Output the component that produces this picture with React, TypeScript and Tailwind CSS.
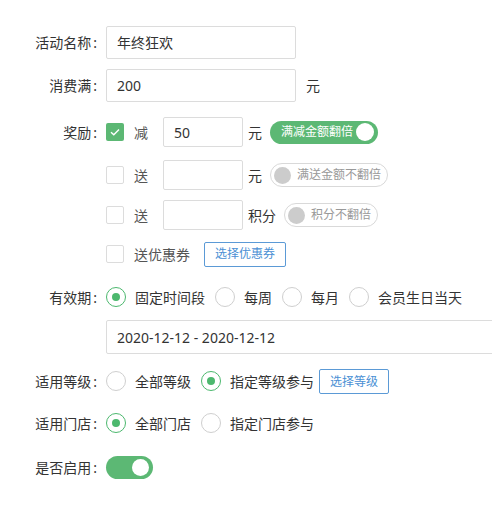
import React from "react";

const GREEN = "bg-[#5cb874]";

function Label({ text }: { text?: string }) {
  return (
    <div className="w-[98px] shrink-0 text-right text-[14px] text-[#333] pr-[1px]">
      {text && (
        <>
          {text}
          <span className="ml-[2px]">:</span>
        </>
      )}
    </div>
  );
}

function Checkbox({ checked }: { checked?: boolean }) {
  if (checked) {
    return (
      <span className={`flex h-[18px] w-[18px] shrink-0 items-center justify-center rounded-[2px] ${GREEN}`}>
        <svg width="12" height="12" viewBox="0 0 12 12" fill="none">
          <path d="M2 6.2 L4.8 8.8 L10 3.4" stroke="#fff" strokeWidth="1.4" />
        </svg>
      </span>
    );
  }
  return <span className="h-[18px] w-[18px] shrink-0 rounded-[2px] border border-[#dcdcdc] bg-white" />;
}

function Radio({ checked, label }: { checked?: boolean; label: string }) {
  return (
    <div className="flex items-center gap-[9px]">
      {checked ? (
        <span className="flex h-[20px] w-[20px] items-center justify-center rounded-full border-[1.5px] border-[#4cb86e] bg-white">
          <span className="h-[8px] w-[8px] rounded-full bg-[#4cb86e]" />
        </span>
      ) : (
        <span className="h-[20px] w-[20px] rounded-full border-[1.5px] border-[#cfcfcf] bg-white" />
      )}
      <span className="text-[14px] text-[#333]">{label}</span>
    </div>
  );
}

function OffPill({ text }: { text: string }) {
  return (
    <div className="flex h-[24px] items-center gap-[6px] rounded-full border border-[#d9d9d9] bg-white pl-[3px] pr-[6px]">
      <span className="h-[17px] w-[17px] rounded-full bg-[#cccccc]" />
      <span className="text-[12px] text-[#999]">{text}</span>
    </div>
  );
}

function BlueButton({ text }: { text: string }) {
  return (
    <button className="h-[25px] rounded-[2px] border border-[#5b9ad6] bg-white px-[10px] text-[12px] text-[#4a8fd4]">
      {text}
    </button>
  );
}

export default function App() {
  const input = "rounded-[2px] border border-[#dcdcdc] bg-white px-[10px] text-[14px] text-[#333] flex items-center";

  return (
    <div
      className="w-[492px] h-[507px] overflow-hidden bg-white pt-[26px]"
      style={{ fontFamily: "'Noto Sans', 'Noto Sans CJK SC', sans-serif" }}
    >
      {/* 活动名称 */}
      <div className="flex h-[33px] items-center gap-2">
        <Label text="活动名称" />
        <div className={`${input} h-[33px] w-[190px]`}>年终狂欢</div>
      </div>

      {/* 消费满 */}
      <div className="mt-[10px] flex h-[33px] items-center gap-2">
        <Label text="消费满" />
        <div className={`${input} h-[33px] w-[190px]`}>200</div>
        <span className="ml-[2px] text-[14px] text-[#333]">元</span>
      </div>

      {/* 奖励 */}
      <div className="mt-[15px] flex h-[30px] items-center gap-2">
        <Label text="奖励" />
        <Checkbox checked />
        <span className="ml-[2px] w-[21px] text-[14px] text-[#555]">减</span>
        <div className={`${input} h-[30px] w-[80px]`}>50</div>
        <span className="-ml-[3px] text-[14px] text-[#333]">元</span>
        <div className={`flex h-[23px] items-center gap-[3px] rounded-full ${GREEN} pl-[11px] pr-[4px]`}>
          <span className="text-[12px] text-white">满减金额翻倍</span>
          <span className="h-[18px] w-[18px] rounded-full bg-white" />
        </div>
      </div>

      <div className="mt-[13px] flex h-[30px] items-center gap-2">
        <Label />
        <Checkbox />
        <span className="ml-[2px] w-[21px] text-[14px] text-[#555]">送</span>
        <div className={`${input} h-[30px] w-[80px]`} />
        <span className="-ml-[3px] text-[14px] text-[#333]">元</span>
        <OffPill text="满送金额不翻倍" />
      </div>

      <div className="mt-[10px] flex h-[30px] items-center gap-2">
        <Label />
        <Checkbox />
        <span className="ml-[2px] w-[21px] text-[14px] text-[#555]">送</span>
        <div className={`${input} h-[30px] w-[80px]`} />
        <span className="-ml-[3px] text-[14px] text-[#333]">积分</span>
        <OffPill text="积分不翻倍" />
      </div>

      <div className="mt-[9px] flex h-[30px] items-center gap-2">
        <Label />
        <Checkbox />
        <span className="ml-[2px] mr-[6px] text-[14px] text-[#555]">送优惠券</span>
        <BlueButton text="选择优惠券" />
      </div>

      {/* 有效期 */}
      <div className="mt-[13px] flex h-[30px] items-center gap-2">
        <Label text="有效期" />
        <div className="flex items-center gap-[10px]">
          <Radio checked label="固定时间段" />
          <Radio label="每周" />
          <Radio label="每月" />
          <Radio label="会员生日当天" />
        </div>
      </div>

      <div className="mt-[8px] flex h-[34px] items-center gap-2">
        <Label />
        <div className={`${input} h-[34px] w-[420px] shrink-0`}>2020-12-12 - 2020-12-12</div>
      </div>

      {/* 适用等级 */}
      <div className="mt-[12px] flex h-[30px] items-center gap-2">
        <Label text="适用等级" />
        <div className="flex items-center gap-[10px]">
          <Radio label="全部等级" />
          <Radio checked label="指定等级参与" />
        </div>
        <div className="-ml-[3px]">
          <BlueButton text="选择等级" />
        </div>
      </div>

      {/* 适用门店 */}
      <div className="mt-[12px] flex h-[30px] items-center gap-2">
        <Label text="适用门店" />
        <div className="flex items-center gap-[10px]">
          <Radio checked label="全部门店" />
          <Radio label="指定门店参与" />
        </div>
      </div>

      {/* 是否启用 */}
      <div className="mt-[14px] flex h-[30px] items-center gap-2">
        <Label text="是否启用" />
        <div className={`flex h-[23px] w-[47px] items-center justify-end rounded-full ${GREEN} pr-[4px]`}>
          <span className="h-[17px] w-[17px] rounded-full bg-white" />
        </div>
      </div>
    </div>
  );
}
